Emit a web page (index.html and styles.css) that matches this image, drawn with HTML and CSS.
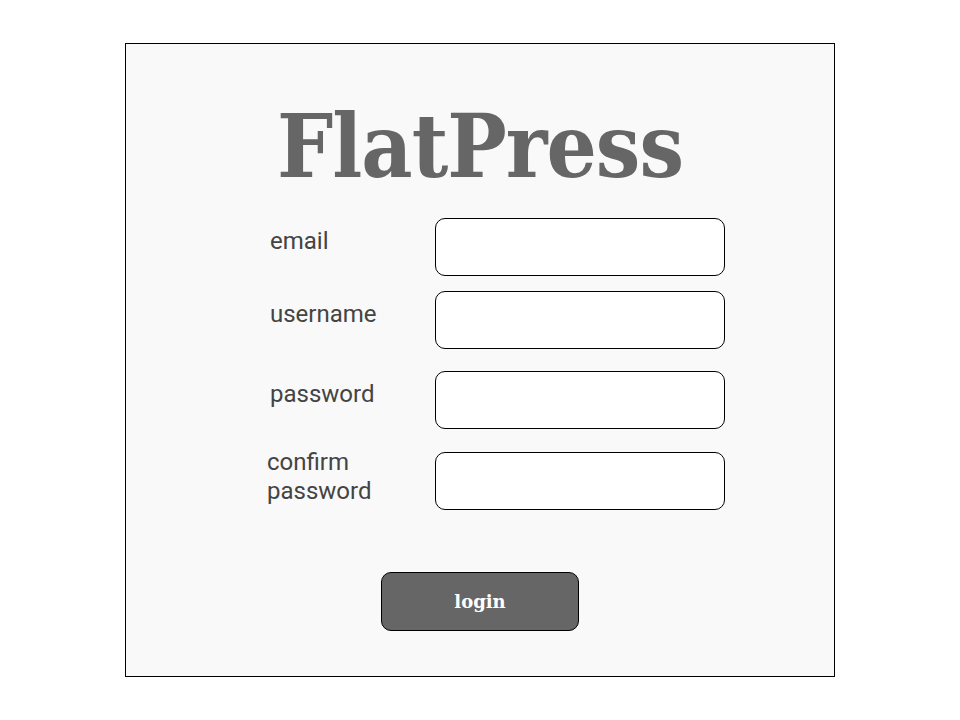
FILE: index.html
```html
<!DOCTYPE html>
<html lang="en">
<head>
  <meta charset="UTF-8">
  <title>FlatPress: sign up</title>
  <link rel="stylesheet" href="styles.css">
</head>
<body>
  <div class="frame">
    <h1 class="brand">FlatPress</h1>
    <form class="signup">
      <div class="field">
        <label class="field-label" for="email">email</label>
        <input class="field-input" id="email" type="text">
      </div>
      <div class="field field-tight">
        <label class="field-label" for="username">username</label>
        <input class="field-input" id="username" type="text">
      </div>
      <div class="field field-mid">
        <label class="field-label" for="password">password</label>
        <input class="field-input" id="password" type="password">
      </div>
      <div class="field">
        <label class="field-label field-label-wrap" for="confirm">confirm<br>password</label>
        <input class="field-input" id="confirm" type="password">
      </div>
      <button class="login-button" type="button">login</button>
    </form>
  </div>
</body>
</html>
```

FILE: styles.css
```css
body {
  margin: 0;
  background: #ffffff;
  font-family: Roboto, "Noto Sans", sans-serif;
}

.frame {
  width: 708px;
  height: 632px;
  margin: 43px 0 0 125px;
  border: 1px solid #000;
  background: #f9f9f9;
  display: flex;
  flex-direction: column;
}

.brand {
  margin: 52px 0 0;
  font-family: "DejaVu Serif", serif;
  font-stretch: condensed;
  font-weight: bold;
  font-size: 88px;
  letter-spacing: -1px;
  line-height: 100px;
  color: #666666;
  text-align: center;
}

.signup {
  display: flex;
  flex-direction: column;
  margin-top: 22px;
}

.field {
  display: flex;
  align-items: flex-start;
  margin: 23px 0 0 144px;
}

.field:first-child {
  margin-top: 0;
}

.field-tight {
  margin-top: 15px;
}

.field-mid {
  margin-top: 22px;
}

.field-label {
  width: 165px;
  padding-top: 9px;
  font-size: 24px;
  color: #444444;
}

.field-label-wrap {
  margin-left: -3px;
  margin-top: -4px;
  width: 168px;
  padding-top: 0;
  line-height: 29px;
}

.field-input {
  box-sizing: border-box;
  width: 290px;
  height: 58px;
  margin: 0;
  border: 1px solid #000;
  border-radius: 10px;
  background: #fff;
}

.login-button {
  align-self: center;
  width: 198px;
  height: 59px;
  margin-top: 62px;
  border: 1px solid #000;
  border-radius: 10px;
  background: #666666;
  color: #fff;
  font-family: "DejaVu Serif", serif;
  font-weight: bold;
  font-size: 18px;
}
```
